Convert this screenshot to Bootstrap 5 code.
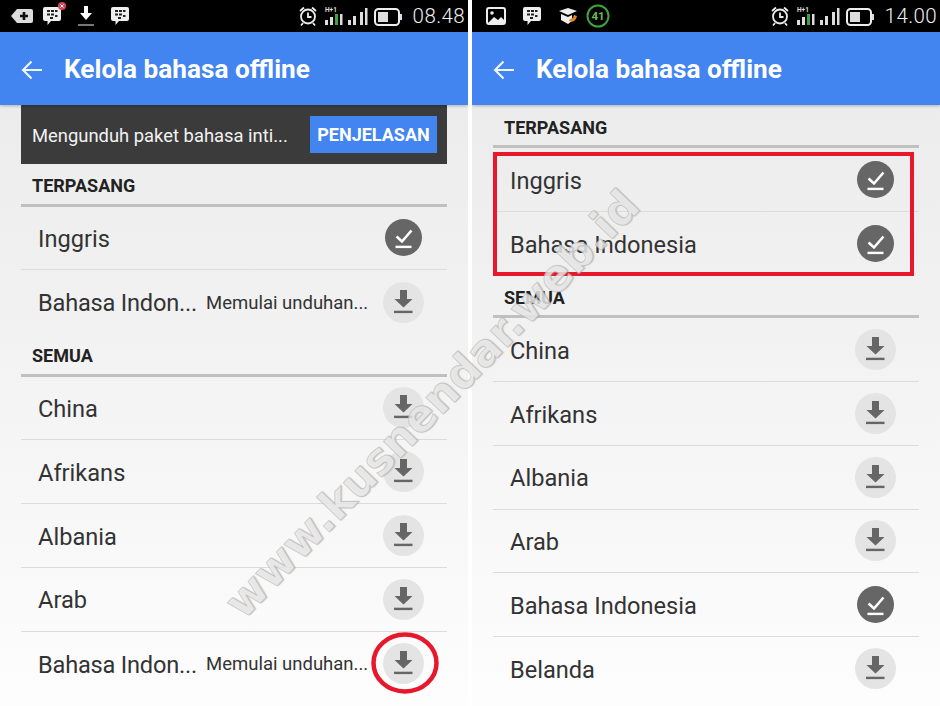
<!DOCTYPE html>
<html lang="id">
<head>
<meta charset="utf-8">
<title>Kelola bahasa offline</title>
<link href="https://cdn.jsdelivr.net/npm/bootstrap@5.3.0/dist/css/bootstrap.min.css" rel="stylesheet">
<style>
html,body{margin:0;width:940px;height:706px;overflow:hidden;background:#fff;font-family:Roboto,"Liberation Sans",sans-serif;color:#2b2b2b}
.stage{width:940px;height:706px;position:relative;gap:4px}
.phone{width:468px;height:706px;overflow:hidden;background:linear-gradient(#ececec 105px,#f1f1f1 300px,#fdfdfd 706px)}
.statusbar{height:32px;background:#000;color:#eee;padding:0 3px 0 10px;flex:none}
.clock{font-size:20.5px;font-weight:300;letter-spacing:.4px;margin-left:11px}
.appbar{height:73px;background:#4285f0;color:#fff;flex:none;padding:3px 0 0 21px;box-shadow:0 1px 3px rgba(0,0,0,.25);position:relative}
.appbar h1{font-size:26.2px;font-weight:700;margin:0 0 0 21px;font-family:Roboto,sans-serif}
.sheet{margin:0 21px;flex:none}
.sheet-shift{margin-top:.75px}
.banner{height:59px;background:#3b3b3b;color:#f2f2f2;font-size:18.4px;padding:0 10px 0 11px}
.banner-text{padding-top:2px}
.explain{background:#4285f0;color:#fff;border:0;border-radius:0;font-size:18px;font-weight:700;padding:0;width:127px;height:37px}
.sect{height:42.5px;border-bottom:3px solid #c0c0c0;font-size:18px;font-weight:700;color:#222;padding:4px 0 0 11px}
.lang{height:63.75px;border-bottom:1px solid #dcdcdc;font-size:23.6px;padding-left:17px;color:#333}
.lang:last-child,.flat{border-bottom-width:0}
.lang-name{min-width:0;flex:1 1 auto;padding-top:4px;white-space:nowrap}
.clip-name{letter-spacing:-.2px}
.status-note{flex:none;font-size:18.5px;white-space:nowrap;width:163px;padding-top:3px}
.slot{width:41px;height:41px;margin:0 23px 0 14px;flex:none;border-radius:50%}
.dl{background:#e4e4e4}
.done{background:#666;width:37px;height:37px;margin:0 25px 0 16px}
.mark-box{position:absolute;left:493px;top:152px;width:421px;height:124px;border:4px solid #e8182c}
.mark-ring{position:absolute;left:371px;top:632px}
.wmark{position:absolute;left:122px;top:382px;width:620px;text-align:center;transform:rotate(-46deg);font-family:"DejaVu Sans",sans-serif;font-weight:700;font-size:44px;line-height:1;color:rgba(244,244,244,.72);white-space:nowrap;-webkit-text-stroke:1px rgba(185,185,185,.7);text-shadow:1px 1px 1px rgba(150,150,150,.5)}
</style>
</head>
<body>
<svg width="0" height="0" class="position-absolute">
  <defs>
    <symbol id="i-dl" viewBox="0 0 41 41"><path d="M17 8h7v9h5.500l-9 8.500-9-8.500h5.500z" fill="#666"/><rect x="11" y="28.700" width="18.500" height="2.400" fill="#666"/></symbol>
    <symbol id="i-ok" viewBox="0 0 37 37"><path d="M11.500 17.500l5.500 5 9.500-11" fill="none" stroke="#fff" stroke-width="2.600"/><rect x="10.500" y="26.700" width="16" height="2.400" fill="#fff"/></symbol>
    <symbol id="i-bbm" viewBox="0 0 20 20"><path d="M3 1h14a2 2 0 0 1 2 2v10a2 2 0 0 1-2 2H9l-3.500 4v-4H3a2 2 0 0 1-2-2V3a2 2 0 0 1 2-2z" fill="#eee"/><g fill="#222"><rect x="5" y="4" width="3" height="2"/><rect x="9" y="4" width="3" height="2"/><rect x="13" y="4" width="2.500" height="2"/><rect x="5" y="7.500" width="3" height="2"/><rect x="9" y="7.500" width="3" height="2"/><rect x="8" y="11" width="3" height="2"/><rect x="13" y="9" width="2.500" height="2"/></g></symbol>
    <symbol id="i-sys" viewBox="0 0 104 22">
      <g fill="none" stroke="#eee" stroke-width="1.800"><circle cx="10" cy="11.500" r="7"/><path d="M10 7.500v4.500h3.500M2 6l4-3.500M18 6l-4-3.500M5 18l-2 2.500M15 18l2 2.500"/></g>
      <text x="27" y="7" font-size="6.500" font-family="Roboto,sans-serif" font-weight="700" fill="#ddd">H+1</text>
      <g fill="#ddd"><rect x="27" y="15" width="3" height="5"/><rect x="32" y="12" width="3" height="8"/><rect x="42" y="9" width="2.500" height="11"/><rect x="50" y="15" width="3" height="5"/><rect x="55" y="11" width="3" height="9"/><rect x="62" y="7" width="3" height="13"/><rect x="67" y="3" width="2.500" height="17"/></g>
      <rect x="37" y="9" width="3" height="11" fill="#3fa33f"/>
      <rect x="77" y="4" width="24" height="16" rx="3.500" fill="none" stroke="#eee" stroke-width="2"/><rect x="80" y="7" width="10" height="10" fill="#ddd"/><rect x="102" y="9" width="2" height="6" fill="#ddd"/>
    </symbol>
    <symbol id="i-back" viewBox="0 0 22 20"><path d="M21 10H2.500M10.500 1.500L2 10l8.500 8.500" fill="none" stroke="#f4f7ff" stroke-width="2"/></symbol>
  </defs>
</svg>

<div class="stage d-flex">
  <section class="phone d-flex flex-column">
    <div class="statusbar d-flex align-items-center">
      <svg width="24" height="16" viewBox="0 0 24 16" class="me-2"><path d="M7 1h14a2 2 0 0 1 2 2v10a2 2 0 0 1-2 2H7L1 8z" fill="#ddd"/><path d="M14 4v8M10 8h8" stroke="#111" stroke-width="2.600"/></svg>
      <span class="position-relative me-3 d-inline-flex"><svg width="20" height="20"><use href="#i-bbm"/></svg><svg width="9" height="9" viewBox="0 0 9 9" class="position-absolute top-0 start-100 translate-middle"><circle cx="4.500" cy="4.500" r="4" fill="#d9435a"/><path d="M3 3l3 3M6 3l-3 3" stroke="#fff"/></svg></span>
      <svg width="16" height="22" viewBox="0 0 16 22" class="me-3"><path d="M6 1h4v7h4l-6 7-6-7h4z" fill="#fff"/><rect y="19" width="16" height="2" fill="#777"/></svg>
      <svg width="20" height="20"><use href="#i-bbm"/></svg>
      <svg width="104" height="22" class="ms-auto"><use href="#i-sys"/></svg>
      <span class="clock">08.48</span>
    </div>
    <header class="appbar d-flex align-items-center">
      <svg width="22" height="20"><use href="#i-back"/></svg>
      <h1>Kelola bahasa offline</h1>
    </header>
    <div class="sheet">
      <div class="banner d-flex align-items-center justify-content-between"><span class="banner-text">Mengunduh paket bahasa inti...</span><button class="btn explain" type="button">PENJELASAN</button></div>
      <div class="sect d-flex align-items-center">TERPASANG</div>
      <div class="lang d-flex align-items-center"><span class="lang-name">Inggris</span><span class="slot done d-flex"><svg width="37" height="37"><use href="#i-ok"/></svg></span></div>
      <div class="lang flat d-flex align-items-center"><span class="lang-name clip-name">Bahasa Indon...</span><span class="status-note">Memulai unduhan...</span><span class="slot dl d-flex"><svg width="41" height="41"><use href="#i-dl"/></svg></span></div>
      <div class="sect d-flex align-items-center">SEMUA</div>
      <div class="lang d-flex align-items-center"><span class="lang-name">China</span><span class="slot dl d-flex"><svg width="41" height="41"><use href="#i-dl"/></svg></span></div>
      <div class="lang d-flex align-items-center"><span class="lang-name">Afrikans</span><span class="slot dl d-flex"><svg width="41" height="41"><use href="#i-dl"/></svg></span></div>
      <div class="lang d-flex align-items-center"><span class="lang-name">Albania</span><span class="slot dl d-flex"><svg width="41" height="41"><use href="#i-dl"/></svg></span></div>
      <div class="lang d-flex align-items-center"><span class="lang-name">Arab</span><span class="slot dl d-flex"><svg width="41" height="41"><use href="#i-dl"/></svg></span></div>
      <div class="lang d-flex align-items-center"><span class="lang-name clip-name">Bahasa Indon...</span><span class="status-note">Memulai unduhan...</span><span class="slot dl d-flex"><svg width="41" height="41"><use href="#i-dl"/></svg></span></div>
    </div>
  </section>

  <section class="phone d-flex flex-column">
    <div class="statusbar d-flex align-items-center">
      <svg width="20" height="18" viewBox="0 0 20 18" class="ms-1 me-3"><rect x="1" y="1" width="18" height="16" rx="2" fill="none" stroke="#eee" stroke-width="2"/><circle cx="6" cy="6" r="1.800" fill="#eee"/><path d="M2 16l6-6 4 3 3-3 4 4v2z" fill="#eee"/></svg>
      <svg width="20" height="20" class="me-3"><use href="#i-bbm"/></svg>
      <svg width="20" height="18" viewBox="0 0 20 18" class="me-2"><path d="M1 4l9-3 9 3-9 4z" fill="#eee"/><path d="M3 7l7 3 4-2v6l-4 3-7-4z" fill="#eee"/><path d="M11 14c3 2 7 0 8-5l-3-1-1 3-3 1z" fill="#e8862a"/></svg>
      <svg width="24" height="24" viewBox="0 0 24 24"><circle cx="12" cy="12" r="10.500" fill="none" stroke="#3fa33f" stroke-width="2"/><text x="12" y="16" text-anchor="middle" font-size="11.500" font-weight="700" font-family="Roboto,sans-serif" fill="#6dbb55">41</text></svg>
      <svg width="104" height="22" class="ms-auto"><use href="#i-sys"/></svg>
      <span class="clock">14.00</span>
    </div>
    <header class="appbar d-flex align-items-center">
      <svg width="22" height="20"><use href="#i-back"/></svg>
      <h1>Kelola bahasa offline</h1>
    </header>
    <div class="sheet sheet-shift">
      <div class="sect d-flex align-items-center">TERPASANG</div>
      <div class="lang d-flex align-items-center"><span class="lang-name">Inggris</span><span class="slot done d-flex"><svg width="37" height="37"><use href="#i-ok"/></svg></span></div>
      <div class="lang flat d-flex align-items-center"><span class="lang-name">Bahasa Indonesia</span><span class="slot done d-flex"><svg width="37" height="37"><use href="#i-ok"/></svg></span></div>
      <div class="sect d-flex align-items-center">SEMUA</div>
      <div class="lang d-flex align-items-center"><span class="lang-name">China</span><span class="slot dl d-flex"><svg width="41" height="41"><use href="#i-dl"/></svg></span></div>
      <div class="lang d-flex align-items-center"><span class="lang-name">Afrikans</span><span class="slot dl d-flex"><svg width="41" height="41"><use href="#i-dl"/></svg></span></div>
      <div class="lang d-flex align-items-center"><span class="lang-name">Albania</span><span class="slot dl d-flex"><svg width="41" height="41"><use href="#i-dl"/></svg></span></div>
      <div class="lang d-flex align-items-center"><span class="lang-name">Arab</span><span class="slot dl d-flex"><svg width="41" height="41"><use href="#i-dl"/></svg></span></div>
      <div class="lang d-flex align-items-center"><span class="lang-name">Bahasa Indonesia</span><span class="slot done d-flex"><svg width="37" height="37"><use href="#i-ok"/></svg></span></div>
      <div class="lang d-flex align-items-center"><span class="lang-name">Belanda</span><span class="slot dl d-flex"><svg width="41" height="41"><use href="#i-dl"/></svg></span></div>
    </div>
  </section>

  <div class="mark-box"></div>
  <svg class="mark-ring" width="68" height="62" viewBox="0 0 68 62"><ellipse cx="34" cy="31" rx="31.500" ry="28.500" fill="none" stroke="#e8182c" stroke-width="4.500"/></svg>
  <div class="wmark">www.kusnendar.web.id</div>
</div>
<script src="https://cdn.jsdelivr.net/npm/bootstrap@5.3.0/dist/js/bootstrap.bundle.min.js"></script>
</body>
</html>
